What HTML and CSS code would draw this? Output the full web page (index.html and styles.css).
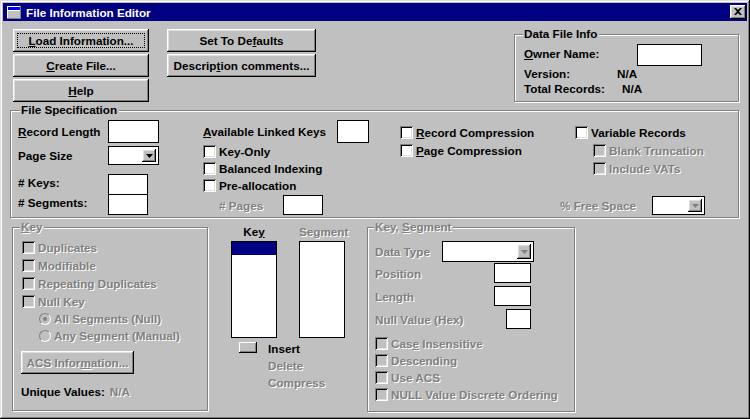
FILE: index.html
```html
<!DOCTYPE html>
<html>
<head>
<meta charset="utf-8">
<title>File Information Editor</title>
<link rel="stylesheet" href="styles.css">
</head>
<body>
<div class="window">
  <div class="titlebar">
    <svg class="ticon" width="14" height="13" viewBox="0 0 14 13">
      <rect x="0" y="0" width="14" height="13" fill="#fff"/>
      <rect x="1" y="1" width="12" height="3" fill="#0000ff"/>
      <rect x="1" y="5" width="12" height="7" fill="#c0c0c0"/>
      <rect x="13" y="0" width="1" height="13" fill="#808080"/>
      <rect x="0" y="12" width="14" height="1" fill="#808080"/>
    </svg>
    <span class="title">File Information Editor</span>
    <div class="close">
      <svg width="8" height="7" viewBox="0 0 8 7">
        <path d="M0 0h2l2 2 2-2h2L5 3.5 8 7H6L4 5 2 7H0l3-3.5z" fill="#000"/>
      </svg>
    </div>
  </div>

  <div class="client">
    <div class="top">
      <div class="btncol c1">
        <div class="btn focus"><span><u>L</u>oad Information...</span></div>
        <div class="btn"><span><u>C</u>reate File...</span></div>
        <div class="btn"><span><u>H</u>elp</span></div>
      </div>
      <div class="btncol c2">
        <div class="btn"><span>Set To De<u>f</u>aults</span></div>
        <div class="btn"><span>Descrip<u>t</u>ion comments...</span></div>
      </div>
      <div class="group datagroup">
        <span class="legend">Data File Info</span>
        <div class="drow owner"><span class="dl-owner"><u>O</u>wner Name:</span><span class="edit ownerbox"></span></div>
        <div class="drow"><span class="dl-ver">Version:</span><span>N/A</span></div>
        <div class="drow"><span class="dl-tot">Total Records:</span><span>N/A</span></div>
      </div>
    </div>

    <div class="group filespec">
      <span class="legend">File Specification</span>
      <div class="fcol fc1">
        <div class="frow fr1"><span class="flabel"><u>R</u>ecord Length</span><span class="edit reclen"></span></div>
        <div class="frow fr2"><span class="flabel">Page Size</span><span class="combo pagesize"><span class="drop"><svg width="7" height="4" viewBox="0 0 7 4"><path d="M0 0h7L3.5 4z" fill="#000"/></svg></span></span></div>
        <div class="frow fr3"><span class="flabel up">&#35; Keys:</span><span class="edit keysbox"></span></div>
        <div class="frow fr4"><span class="flabel up"># Segments:</span><span class="edit keysbox"></span></div>
      </div>
      <div class="fcol fc2">
        <div class="frow fr1"><span class="alk"><u>A</u>vailable Linked Keys</span><span class="edit alkbox"></span></div>
        <div class="cbrow r17"><span class="cb"></span><span>Key-Only</span></div>
        <div class="cbrow r17"><span class="cb"></span><span>Balanced Indexing</span></div>
        <div class="cbrow r17"><span class="cb"></span><span>Pre-allocation</span></div>
        <div class="frow pages"><span class="pglabel dis"># Pages</span><span class="edit pgbox"></span></div>
      </div>
      <div class="fcol fc3">
        <div class="cbrow r18"><span class="cb"></span><span><u>R</u>ecord Compression</span></div>
        <div class="cbrow r18"><span class="cb"></span><span><u>P</u>age Compression</span></div>
      </div>
      <div class="fcol fc4">
        <div class="cbrow r18 ind1"><span class="cb"></span><span>Variable Records</span></div>
        <div class="cbrow r18 ind2 dis"><span class="cb off"></span><span>Blank Truncation</span></div>
        <div class="cbrow r18 ind2 dis"><span class="cb off"></span><span>Include VATs</span></div>
        <div class="frow free"><span class="freelabel dis">% Free Space</span><span class="combo freecombo"><span class="drop"><svg width="7" height="4" viewBox="0 0 7 4"><path d="M0 0h7L3.5 4z" fill="#808080"/></svg></span></span></div>
      </div>
    </div>

    <div class="bottom">
      <div class="group keygroup">
        <span class="legend dis"><u>K</u>ey</span>
        <div class="cbrow r18 dis"><span class="cb off"></span><span>Duplicates</span></div>
        <div class="cbrow r18 dis"><span class="cb off"></span><span>Modifiable</span></div>
        <div class="cbrow r18 dis"><span class="cb off"></span><span>Repeating Duplicates</span></div>
        <div class="cbrow r18 dis"><span class="cb off"></span><span>Null Key</span></div>
        <div class="cbrow r17 radrow dis"><span class="radio on"></span><span>All Segments (Null)</span></div>
        <div class="cbrow r17 radrow dis"><span class="radio"></span><span>Any Segment (Manual)</span></div>
        <div class="btn acs dis"><span>ACS Infor<u>m</u>ation...</span></div>
        <div class="unique"><span>Unique Values:</span><span class="dis nav">N/A</span></div>
      </div>

      <div class="lists">
        <div class="listlabels"><span class="ll">Ke<u>y</u></span><span class="ll dis">Se<u>g</u>ment</span></div>
        <div class="listboxes">
          <div class="listbox"><div class="sel"></div></div>
          <div class="listbox"></div>
        </div>
        <div class="listctl">
          <div class="minibtn"></div>
          <div class="ctlabels"><span>Insert</span><span class="dis">Delete</span><span class="dis">Compress</span></div>
        </div>
      </div>

      <div class="group ksgroup">
        <span class="legend dis">Key, <u>S</u>egment</span>
        <div class="krow k1"><span class="klabel dis">Data Type</span><span class="combo dtcombo"><span class="drop"><svg width="7" height="4" viewBox="0 0 7 4"><path d="M0 0h7L3.5 4z" fill="#808080"/></svg></span></span></div>
        <div class="krow k2"><span class="klabel wpos dis">Position</span><span class="edit posbox"></span></div>
        <div class="krow k3"><span class="klabel wpos dis">Length</span><span class="edit posbox"></span></div>
        <div class="krow k3"><span class="klabel wnull dis">Null Value (Hex)</span><span class="edit nullbox"></span></div>
        <div class="kchecks">
          <div class="cbrow r17 dis"><span class="cb off"></span><span>Cas<u>e</u> Insensitive</span></div>
          <div class="cbrow r17 dis"><span class="cb off"></span><span>Descending</span></div>
          <div class="cbrow r17 dis"><span class="cb off"></span><span>Use ACS</span></div>
          <div class="cbrow r17 dis"><span class="cb off"></span><span>NULL Value Discrete Ordering</span></div>
        </div>
      </div>
    </div>
  </div>
</div>
</body>
</html>
```
FILE: styles.css
```css
* { box-sizing: border-box; }
html, body { margin: 0; padding: 0; background: #c0c0c0; }
body {
  font-family: "Liberation Sans", Arial, sans-serif;
  font-weight: bold;
  font-size: 11.7px;
  line-height: 13px;
  color: #000;
}
u { text-decoration: underline; text-underline-offset: 1px; }

.window {
  width: 750px;
  height: 419px;
  padding: 3px;
  background: #c0c0c0;
  box-shadow: inset -1px -1px #000, inset 1px 1px #dfdfdf, inset -2px -2px #808080, inset 2px 2px #fff;
  overflow: hidden;
}

.titlebar {
  height: 18px;
  background: #000080;
  display: flex;
  align-items: center;
  padding-left: 4px;
  padding-right: 1px;
}
.ticon { display: block; margin-right: 5px; }
.title { color: #fff; flex: 1; }
.close {
  width: 16px;
  height: 14px;
  background: #c0c0c0;
  box-shadow: inset -1px -1px #000, inset 1px 1px #fff, inset -2px -2px #808080, inset 2px 2px #dfdfdf;
  display: flex;
  align-items: center;
  justify-content: center;
  padding-bottom: 1px;
  padding-right: 1px;
}
.close svg { display: block; }

.client { height: 395px; }

/* buttons */
.btn {
  position: relative;
  height: 23px;
  display: flex;
  align-items: center;
  justify-content: center;
  background: #c0c0c0;
  box-shadow: inset -1px -1px #000, inset 1px 1px #fff, inset -2px -2px #808080, inset 2px 2px #dfdfdf;
  white-space: nowrap;
}
.btn.focus::after {
  content: "";
  position: absolute;
  left: 4px; top: 4px; right: 4px; bottom: 4px;
  border: 1px dotted #000;
}

/* top row */
.top {
  display: flex;
  align-items: flex-start;
  margin: 8px 0 0 10px;
  height: 73px;
}
.btncol { display: flex; flex-direction: column; gap: 2px; }
.c1 { width: 136px; }
.c2 { width: 149px; margin-left: 18px; }

.group {
  position: relative;
  border: 1px solid #808080;
  box-shadow: inset 1px 1px #fff, 1px 1px #fff;
}
.legend {
  position: absolute;
  top: -8px;
  background: #c0c0c0;
  padding: 0 2px 0 1px;
  white-space: nowrap;
}

.datagroup {
  width: 225px;
  height: 68px;
  margin-left: 198px;
  margin-top: 5px;
  padding: 9px 0 0 9px;
}
.datagroup .legend { left: 8px; }
.drow { display: flex; align-items: center; height: 15px; }
.drow.owner { height: 22px; align-items: center; }
.dl-owner { width: 113px; padding-bottom: 3px; }
.dl-ver { width: 93px; }
.dl-tot { width: 98px; }
.ownerbox { width: 65px; height: 22px; }

.edit {
  display: block;
  background: #fff;
  border: 1px solid #000;
}

.combo {
  display: flex;
  justify-content: flex-end;
  align-items: stretch;
  background: #fff;
  border: 1px solid #000;
  padding: 2px 2px 2px 0;
}
.drop {
  width: 14px;
  display: flex;
  align-items: center;
  justify-content: center;
  background: #c0c0c0;
  box-shadow: inset -1px -1px #000, inset 1px 1px #fff, inset -2px -2px #808080, inset 2px 2px #dfdfdf;
}
.drop svg { display: block; }

/* file specification */
.filespec {
  display: flex;
  width: 729px;
  height: 108px;
  margin: 8px 0 0 7px;
}
.filespec .legend { left: 9px; }
.fcol { display: flex; flex-direction: column; }
.fc1 { width: 192px; padding: 9px 0 0 7px; }
.fc2 { width: 197px; padding-top: 9px; }
.fc3 { width: 160px; padding-top: 12px; }
.fc4 { flex: 1; padding-top: 12px; }

.frow { display: flex; align-items: center; }
.fr1 { height: 23px; }
.fr2 { height: 19px; margin-top: 3px; }
.fr3 { height: 21px; margin-top: 9px; }
.fr4 { height: 21px; margin-top: -1px; }
.flabel { width: 90px; }
.flabel.up { padding-bottom: 4px; }
.reclen { width: 51px; height: 23px; }
.pagesize { width: 51px; height: 19px; }
.keysbox { width: 40px; height: 21px; }
.alk { width: 134px; }
.alkbox { width: 32px; height: 23px; }
.pages { height: 20px; margin-top: 1px; padding-left: 16px; }
.pglabel { width: 64px; }
.pgbox { width: 40px; height: 20px; }

.cbrow { display: flex; align-items: center; white-space: nowrap; }
.r17 { height: 17px; }
.r18 { height: 18px; }
.cb {
  width: 13px;
  height: 13px;
  flex: none;
  margin-right: 3px;
  background: #fff;
  box-shadow: inset 1px 1px #808080, inset -1px -1px #fff, inset 2px 2px #000, inset -2px -2px #dfdfdf;
}
.cb.off { background: #c0c0c0; }
.ind1 { padding-left: 15px; }
.ind2 { padding-left: 33px; }
.free { height: 19px; margin-top: 19px; }
.freelabel { width: 92px; }
.freecombo { width: 53px; height: 19px; }

.dis { color: #808080; text-shadow: 1px 1px 0 #fff; }

/* bottom */
.bottom {
  display: flex;
  align-items: flex-start;
  margin: 9px 0 0 9px;
}
.keygroup {
  width: 196px;
  height: 184px;
  padding: 10px 0 0 9px;
}
.keygroup .legend { left: 7px; }
.radrow { padding-left: 17px; }
.radio {
  position: relative;
  width: 12px;
  height: 12px;
  flex: none;
  margin-right: 3px;
  border-radius: 50%;
  border: 1px solid #808080;
  border-right-color: #fff;
  border-bottom-color: #fff;
  background: #c0c0c0;
}
.radio.on::after {
  content: "";
  position: absolute;
  left: 3px; top: 3px;
  width: 4px; height: 4px;
  border-radius: 50%;
  background: #808080;
}
.acs { width: 113px; margin: 7px 0 0 -1px; }
.unique { display: flex; height: 18px; align-items: center; margin-top: 8px; margin-left: -1px; }
.nav { margin-left: 5px; }

.lists { width: 114px; margin-left: 23px; }
.listlabels { display: flex; gap: 22px; height: 14px; align-items: flex-start; margin-top: -2px; margin-bottom: 2px; }
.ll { width: 46px; text-align: center; }
.listboxes { display: flex; gap: 22px; }
.listbox { width: 46px; height: 97px; background: #fff; border: 1px solid #000; }
.sel { height: 13px; background: #000080; }
.listctl { display: flex; align-items: flex-start; }
.minibtn {
  width: 18px;
  height: 11px;
  margin: 4px 0 0 8px;
  background: #c0c0c0;
  box-shadow: inset -1px -1px #000, inset 1px 1px #fff, inset -2px -2px #808080;
}
.ctlabels { display: flex; flex-direction: column; margin-left: 11px; padding-top: 2px; }
.ctlabels span { height: 17px; line-height: 17px; }

.ksgroup {
  width: 208px;
  height: 185px;
  margin-left: 22px;
  padding: 13px 0 0 7px;
}
.ksgroup .legend { left: 6px; }
.krow { display: flex; align-items: center; }
.k1 { height: 21px; }
.k2 { height: 20px; margin-top: 1px; }
.k3 { height: 20px; margin-top: 3px; }
.klabel { width: 67px; }
.wpos { width: 119px; }
.wnull { width: 131px; }
.dtcombo { width: 92px; height: 21px; }
.posbox { width: 37px; height: 20px; }
.nullbox { width: 25px; height: 20px; }
.kchecks { margin-top: 6px; }
```
